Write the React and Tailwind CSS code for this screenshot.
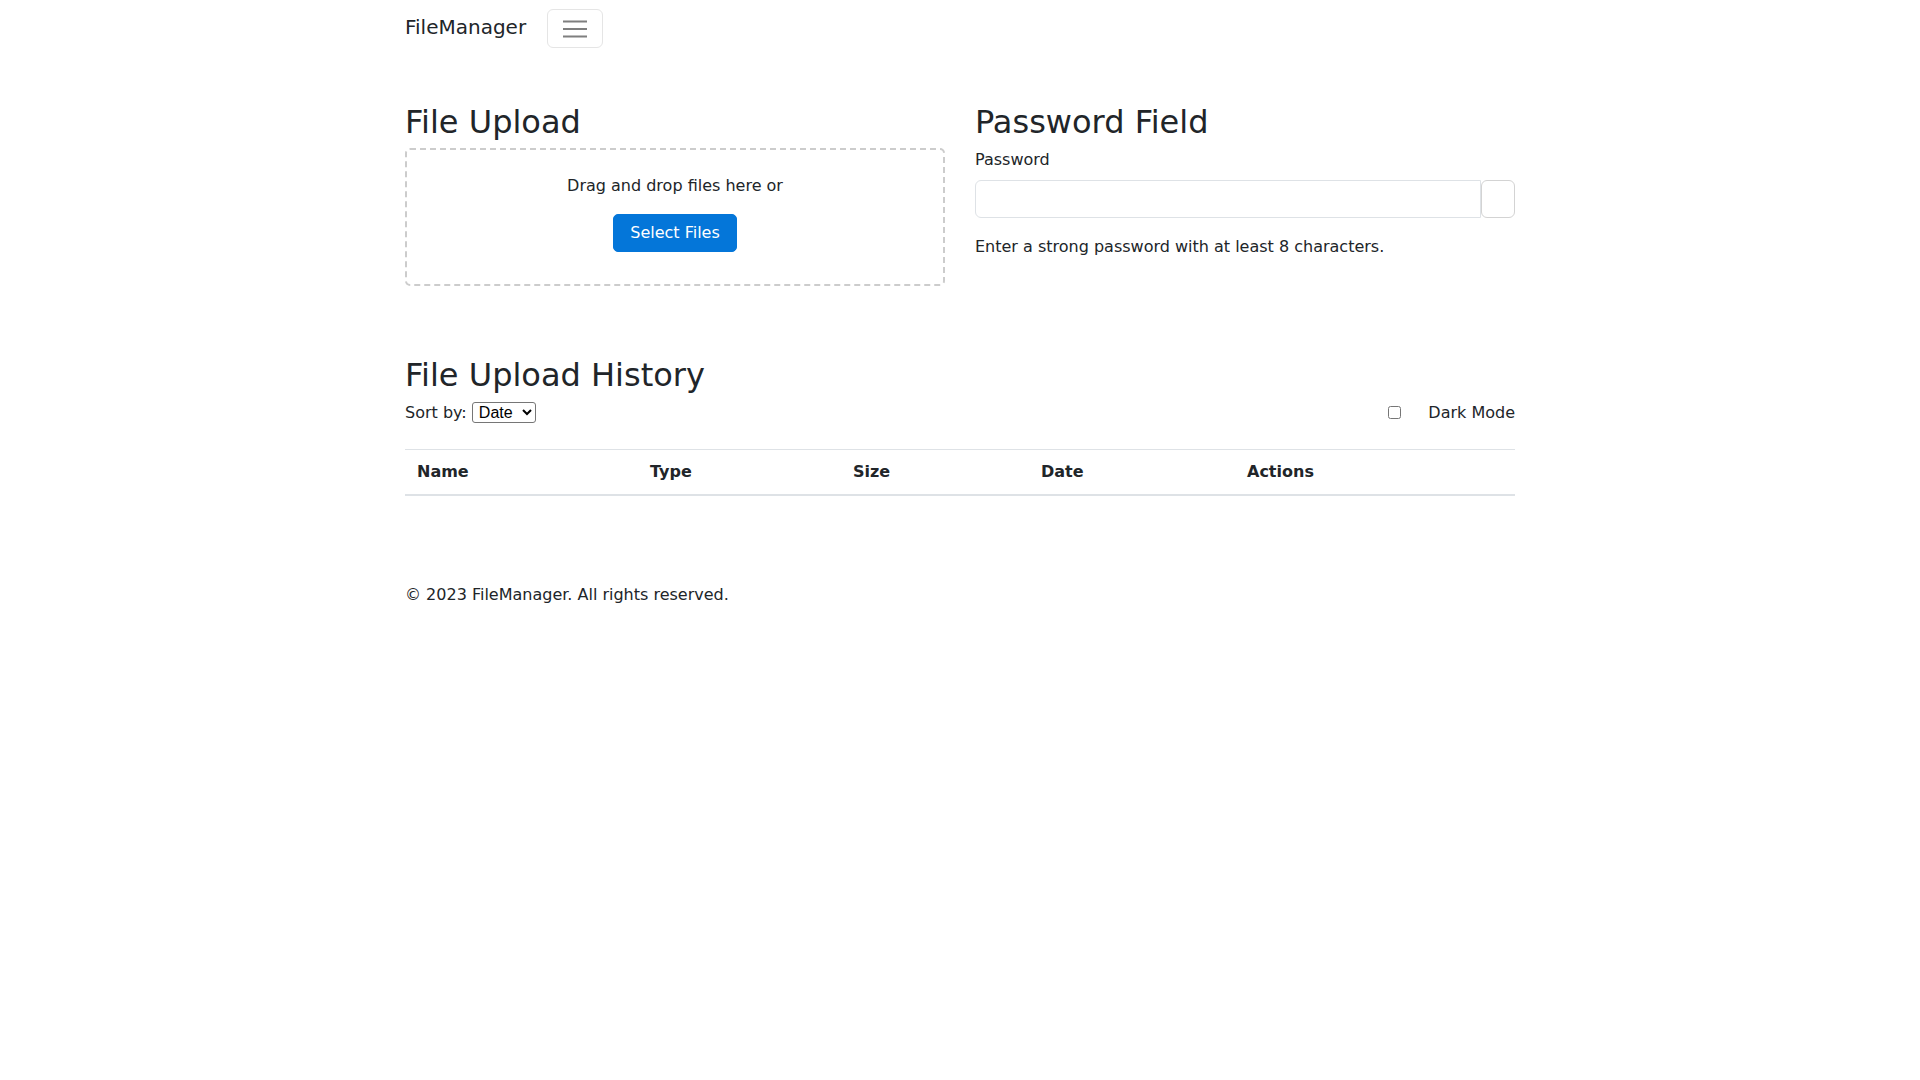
export default function App() {
  return (
    <div className="min-h-screen bg-white font-['DejaVu_Sans',sans-serif] text-base leading-6 text-[#212529]">
      {/* Navbar */}
      <nav className="h-14">
        <div className="mx-auto flex h-full w-[1110px] items-start">
          <a className="mt-[12px] mr-[21px] text-xl leading-[30px] text-[#212529]">FileManager</a>
          <button className="mt-[9px] flex h-[39px] w-[56px] items-center justify-center rounded-[6px] border border-[#e5e5e5] bg-white">
            <svg width="30" height="30" viewBox="0 0 30 30">
              <path d="M3 7.5h24M3 15h24M3 22.5h24" stroke="#7f7f7f" strokeWidth="2" />
            </svg>
          </button>
        </div>
      </nav>

      <main className="mx-auto w-[1110px]">
        {/* Upload + password row */}
        <div className="mt-[47px] grid grid-cols-2 gap-[30px]">
          <section>
            <h2 className="mb-[7px] text-[32px] leading-[1.2] font-normal">File Upload</h2>
            <div className="rounded-[5px] border-2 border-dashed border-[#cccccc] pt-[24px] pb-[32px] text-center">
              <p className="mb-4">Drag and drop files here or</p>
              <button className="h-[38px] w-[124px] rounded-[5px] border border-[#0476d9] bg-[#0476d9] text-white">
                Select Files
              </button>
            </div>
          </section>

          <section>
            <h2 className="mb-[7px] text-[32px] leading-[1.2] font-normal">Password Field</h2>
            <label className="mb-2 block">Password</label>
            <div className="flex h-[38px]">
              <input
                type="password"
                className="h-full flex-1 rounded-l-[6px] border border-[#dee2e6] px-3 outline-none"
              />
              <button className="h-full w-[34px] rounded-[6px] border border-[#d3d3d3] bg-white" />
            </div>
            <p className="mt-[17px]">Enter a strong password with at least 8 characters.</p>
          </section>
        </div>

        {/* History */}
        <section className="mt-[70px]">
          <h2 className="mb-[6px] text-[32px] leading-[1.2] font-normal">File Upload History</h2>
          <div className="mb-[24px] flex h-6 items-center justify-between">
            <div className="flex items-center">
              <span>Sort by:&nbsp;</span>
              <select className="h-[21px] w-[64px] rounded-[3px] border border-[#767676] bg-white pl-[2px] font-['Liberation_Sans',Arial,sans-serif] text-[16px] leading-[19px] text-black">
                <option>Date</option>
                <option>Name</option>
                <option>Size</option>
              </select>
            </div>
            <label className="flex items-center">
              <input type="checkbox" className="m-0 mr-[27px] h-[13px] w-[13px]" />
              <span>Dark Mode</span>
            </label>
          </div>

          <table className="w-full border-collapse text-left">
            <thead>
              <tr className="border-t border-b-2 border-t-[#dee2e6] border-b-[#dee2e6]">
                <th className="w-[233px] px-3 py-[10px] font-bold">Name</th>
                <th className="w-[203px] px-3 py-[10px] font-bold">Type</th>
                <th className="w-[188px] px-3 py-[10px] font-bold">Size</th>
                <th className="w-[206px] px-3 py-[10px] font-bold">Date</th>
                <th className="px-3 py-[10px] font-bold">Actions</th>
              </tr>
            </thead>
            <tbody></tbody>
          </table>
        </section>

        <footer className="mt-[87px]">
          <p>© 2023 FileManager. All rights reserved.</p>
        </footer>
      </main>
    </div>
  )
}
